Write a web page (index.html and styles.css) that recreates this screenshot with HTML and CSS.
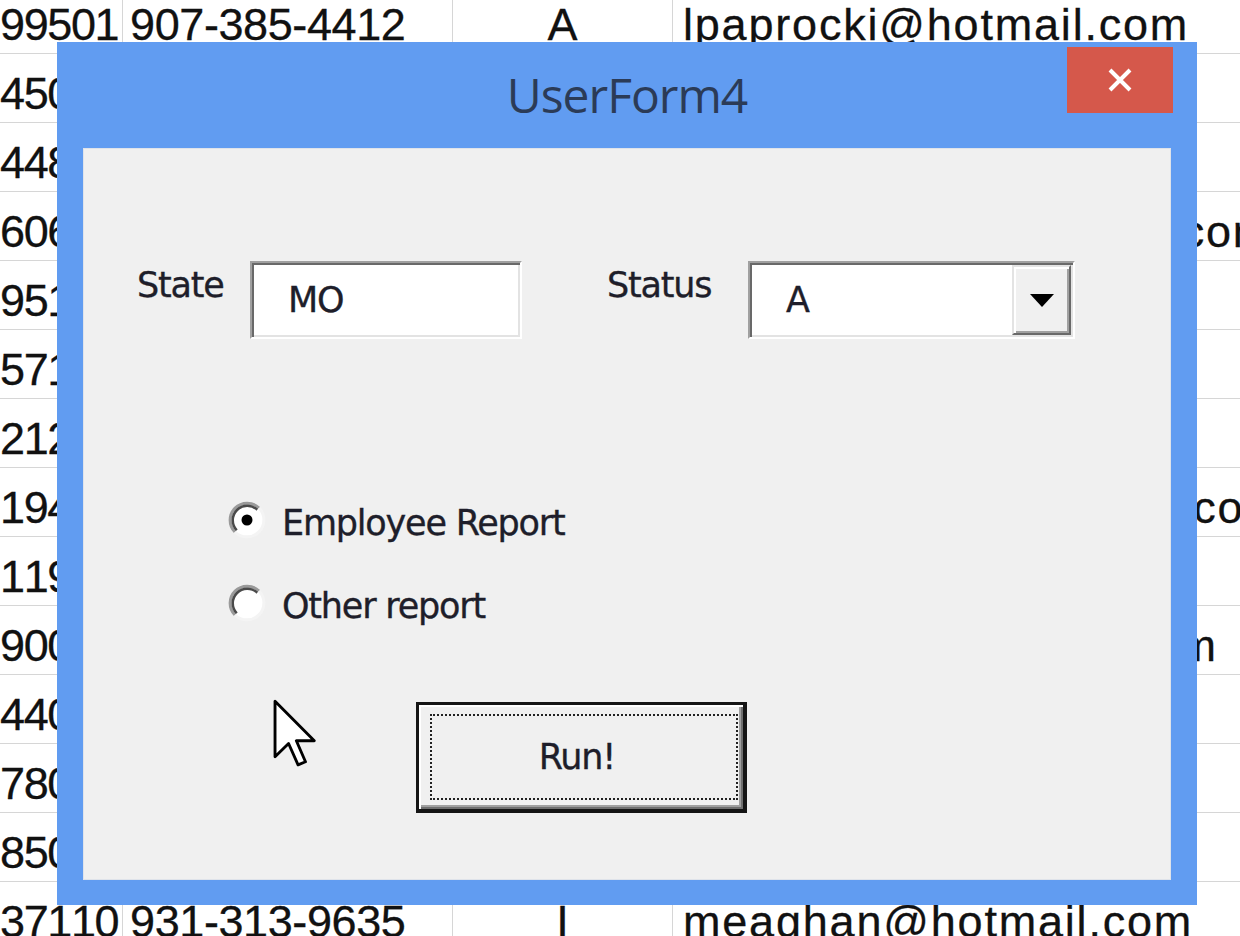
FILE: index.html
```html
<!DOCTYPE html>
<html lang="en">
<head>
<meta charset="utf-8">
<title>UserForm4</title>
<link rel="stylesheet" href="styles.css">
</head>
<body>
<div class="sheet">
  <div class="row"><div class="c zip">99501</div><div class="c phone">907-385-4412</div><div class="c st">A</div><div class="c mail">lpaprocki@hotmail.com</div></div>
  <div class="row"><div class="c zip">45011</div><div class="c phone">513-570-1893</div><div class="c st">A</div><div class="c mail">donette.foller@cox.net</div></div>
  <div class="row"><div class="c zip">44805</div><div class="c phone">419-503-2484</div><div class="c st">I</div><div class="c mail">simona@morasca.com</div></div>
  <div class="row"><div class="c zip">60632</div><div class="c phone">773-573-6914</div><div class="c st">A</div><div class="c mail">mitsue_tollner@yahoo.com</div></div>
  <div class="row"><div class="c zip">95111</div><div class="c phone">408-752-3500</div><div class="c st">A</div><div class="c mail">leota@hotmail.com</div></div>
  <div class="row"><div class="c zip">57105</div><div class="c phone">605-414-2147</div><div class="c st">I</div><div class="c mail">sage_wieser@cox.net</div></div>
  <div class="row"><div class="c zip">21224</div><div class="c phone">410-655-8723</div><div class="c st">A</div><div class="c mail">kris@gmail.com</div></div>
  <div class="row"><div class="c zip">19443</div><div class="c phone">215-874-1229</div><div class="c st">A</div><div class="c mail">minna_amigon@yahoo.com</div></div>
  <div class="row"><div class="c zip">11953</div><div class="c phone">631-335-3414</div><div class="c st">I</div><div class="c mail">amaclead@gmail.com</div></div>
  <div class="row"><div class="c zip">90034</div><div class="c phone">310-498-5651</div><div class="c st">A</div><div class="c mail">kiley.caldarera@aol.com</div></div>
  <div class="row"><div class="c zip">44023</div><div class="c phone">440-780-8425</div><div class="c st">A</div><div class="c mail">gruta@cox.net</div></div>
  <div class="row"><div class="c zip">78045</div><div class="c phone">956-537-6195</div><div class="c st">I</div><div class="c mail">calbares@gmail.com</div></div>
  <div class="row"><div class="c zip">85013</div><div class="c phone">602-277-4385</div><div class="c st">A</div><div class="c mail">mattie@aol.com</div></div>
  <div class="row"><div class="c zip">37110</div><div class="c phone">931-313-9635</div><div class="c st">I</div><div class="c mail">meaghan@hotmail.com</div></div>
</div>

<div class="dialog">
  <div class="titlebar">
    <div class="tb-spacer"></div>
    <div class="title">UserForm4</div>
    <div class="close">
      <svg width="24" height="24" viewBox="0 0 24 24"><path d="M2 2 L22 22 M22 2 L2 22" stroke="#fff" stroke-width="4" fill="none"/></svg>
    </div>
  </div>
  <div class="panel">
    <div class="fields">
      <div class="lbl lbl-state">State</div>
      <div class="textbox sunken">MO</div>
      <div class="lbl lbl-status">Status</div>
      <div class="combo sunken">
        <span class="combo-val">A</span>
        <span class="dd"><svg width="24" height="13" viewBox="0 0 24 13"><polygon points="0,0 24,0 12,13" fill="#000"/></svg></span>
      </div>
    </div>
    <div class="radios">
      <div class="radio">
        <svg class="rb" width="38" height="38" viewBox="0 0 38 38">
          <circle cx="19" cy="19" r="17" fill="#fff"/>
          <path d="M6.98 31.02 A17 17 0 0 1 31.02 6.98" stroke="#9a9a9a" stroke-width="3" fill="none"/>
          <path d="M8.75 29.25 A14.5 14.5 0 0 1 29.25 8.75" stroke="#4a4a4a" stroke-width="2.5" fill="none"/>
          <path d="M31.02 6.98 A17 17 0 0 1 6.98 31.02" stroke="#f4f4f4" stroke-width="3" fill="none"/>
          <circle cx="19" cy="19" r="5.5" fill="#000"/>
        </svg>
        <span class="rlabel">Employee Report</span>
      </div>
      <div class="radio">
        <svg class="rb" width="38" height="38" viewBox="0 0 38 38">
          <circle cx="19" cy="19" r="17" fill="#fff"/>
          <path d="M6.98 31.02 A17 17 0 0 1 31.02 6.98" stroke="#9a9a9a" stroke-width="3" fill="none"/>
          <path d="M8.75 29.25 A14.5 14.5 0 0 1 29.25 8.75" stroke="#4a4a4a" stroke-width="2.5" fill="none"/>
          <path d="M31.02 6.98 A17 17 0 0 1 6.98 31.02" stroke="#f4f4f4" stroke-width="3" fill="none"/>
        </svg>
        <span class="rlabel">Other report</span>
      </div>
    </div>
    <div class="actions">
      <button class="btn" type="button"><span class="focus">Run!</span></button>
    </div>
  </div>
</div>

<svg class="cursor" width="44" height="68" viewBox="0 0 13 20">
  <path d="M0.6 0.6 L0.6 17 L4.6 13.1 L7.4 19.4 L9.6 18.5 L6.9 12.3 L12.2 12.3 Z" fill="#fff" stroke="#000" stroke-width="0.85" stroke-linejoin="round"/>
</svg>
</body>
</html>
```

FILE: styles.css
```css
html, body {
  margin: 0;
  padding: 0;
}
body {
  width: 1240px;
  height: 936px;
  overflow: hidden;
  position: relative;
  background: #ffffff;
}

/* ---------- spreadsheet behind ---------- */
.sheet {
  margin-top: -15px;
  font-family: "Liberation Sans", Arial, sans-serif;
  font-size: 45px;
  font-kerning: none;
  color: #111;
  -webkit-text-stroke: 0.3px #111;
}
.row {
  display: grid;
  grid-template-columns: 123px 330px 220px 900px;
  height: 69px;
  box-sizing: border-box;
  border-bottom: 1px solid #d6d6d6;
}
.c {
  box-sizing: border-box;
  padding-top: 12px;
  line-height: 56px;
  white-space: nowrap;
  overflow: hidden;
}
.zip {
  border-right: 1px solid #d6d6d6;
  text-align: right;
  padding-right: 4px;
  letter-spacing: -1.4px;
}
.phone {
  border-right: 1px solid #d6d6d6;
  padding-left: 7px;
  letter-spacing: -0.4px;
}
.st {
  border-right: 1px solid #d6d6d6;
  text-align: center;
}
.mail {
  padding-left: 10px;
  letter-spacing: 1.8px;
  overflow: visible;
}

/* ---------- dialog ---------- */
.dialog {
  position: absolute;
  left: 57px;
  top: 42px;
  width: 1140px;
  height: 863px;
  background: #619cf1;
  display: flex;
  flex-direction: column;
}
.titlebar {
  height: 106px;
  flex: none;
  display: grid;
  grid-template-columns: 1fr auto 1fr;
}
.title {
  align-self: center;
  font-family: "Open Sans", "Noto Sans", sans-serif;
  font-size: 48px;
  letter-spacing: -1px;
  line-height: 1;
  color: #2b3b57;
}
.close {
  justify-self: end;
  align-self: start;
  margin: 5px 24px 0 0;
  width: 106px;
  height: 66px;
  background: #d5584b;
  display: flex;
  align-items: center;
  justify-content: center;
}
.panel {
  flex: 1;
  margin: 0 26px 25px 26px;
  background: #f0f0f0;
  border: 1px solid #dfe3ea;
  padding-top: 112px;
  font-family: "DejaVu Sans", Verdana, sans-serif;
  font-size: 35px;
  letter-spacing: -1.2px;
  color: #1e1e2a;
  -webkit-text-stroke: 0.35px #1e1e2a;
}

.fields {
  display: flex;
  align-items: flex-start;
  padding-left: 53px;
}
.lbl {
  line-height: 40px;
  margin-top: 4px;
}
.lbl-state {
  width: 113px;
}
.lbl-status {
  margin-left: 85px;
  width: 141px;
}
.sunken {
  box-sizing: border-box;
  height: 78px;
  background: #ffffff;
  border-style: solid;
  border-width: 2px;
  border-color: #a0a0a0 #ffffff #ffffff #a0a0a0;
  box-shadow: inset 2px 2px 0 #696969, inset -2px -2px 0 #e3e3e3;
}
.textbox {
  width: 272px;
  display: flex;
  align-items: center;
  padding-left: 36px;
}
.combo {
  width: 327px;
  display: flex;
  align-items: stretch;
}
.combo-val {
  flex: 1;
  display: flex;
  align-items: center;
  padding-left: 36px;
}
.dd {
  width: 59px;
  margin: 2px 2px 2px 0;
  box-sizing: border-box;
  background: #f0f0f0;
  border-style: solid;
  border-width: 2px;
  border-color: #e3e3e3 #696969 #696969 #e3e3e3;
  box-shadow: inset 2px 2px 0 #ffffff, inset -2px -2px 0 #a0a0a0;
  display: flex;
  align-items: center;
  justify-content: center;
}

.radios {
  margin-top: 161px;
  padding-left: 144px;
  display: flex;
  flex-direction: column;
  gap: 43px;
}
.radio {
  height: 40px;
  display: flex;
  align-items: center;
  gap: 16px;
}
.rb {
  flex: none;
}
.rlabel {
  padding-top: 5px;
}

.actions {
  margin-top: 79px;
  padding-left: 332px;
}
.btn {
  display: block;
  width: 331px;
  height: 111px;
  box-sizing: border-box;
  margin: 0;
  border: 3px solid #151515;
  border-right-width: 4px;
  border-bottom-width: 4px;
  background: #f0f0f0;
  padding: 9px 5px 9px 11px;
  box-shadow: inset 2px 2px 0 #ffffff, inset -2px -2px 0 #6f6f6f, inset -4px -4px 0 #a0a0a0;
  font: inherit;
  letter-spacing: inherit;
  color: inherit;
}
.focus {
  box-sizing: border-box;
  display: flex;
  width: 100%;
  height: 100%;
  align-items: center;
  justify-content: center;
  padding-right: 14px;
  border: 2px dotted #222;
}

.cursor {
  position: absolute;
  left: 273px;
  top: 699px;
}
```
